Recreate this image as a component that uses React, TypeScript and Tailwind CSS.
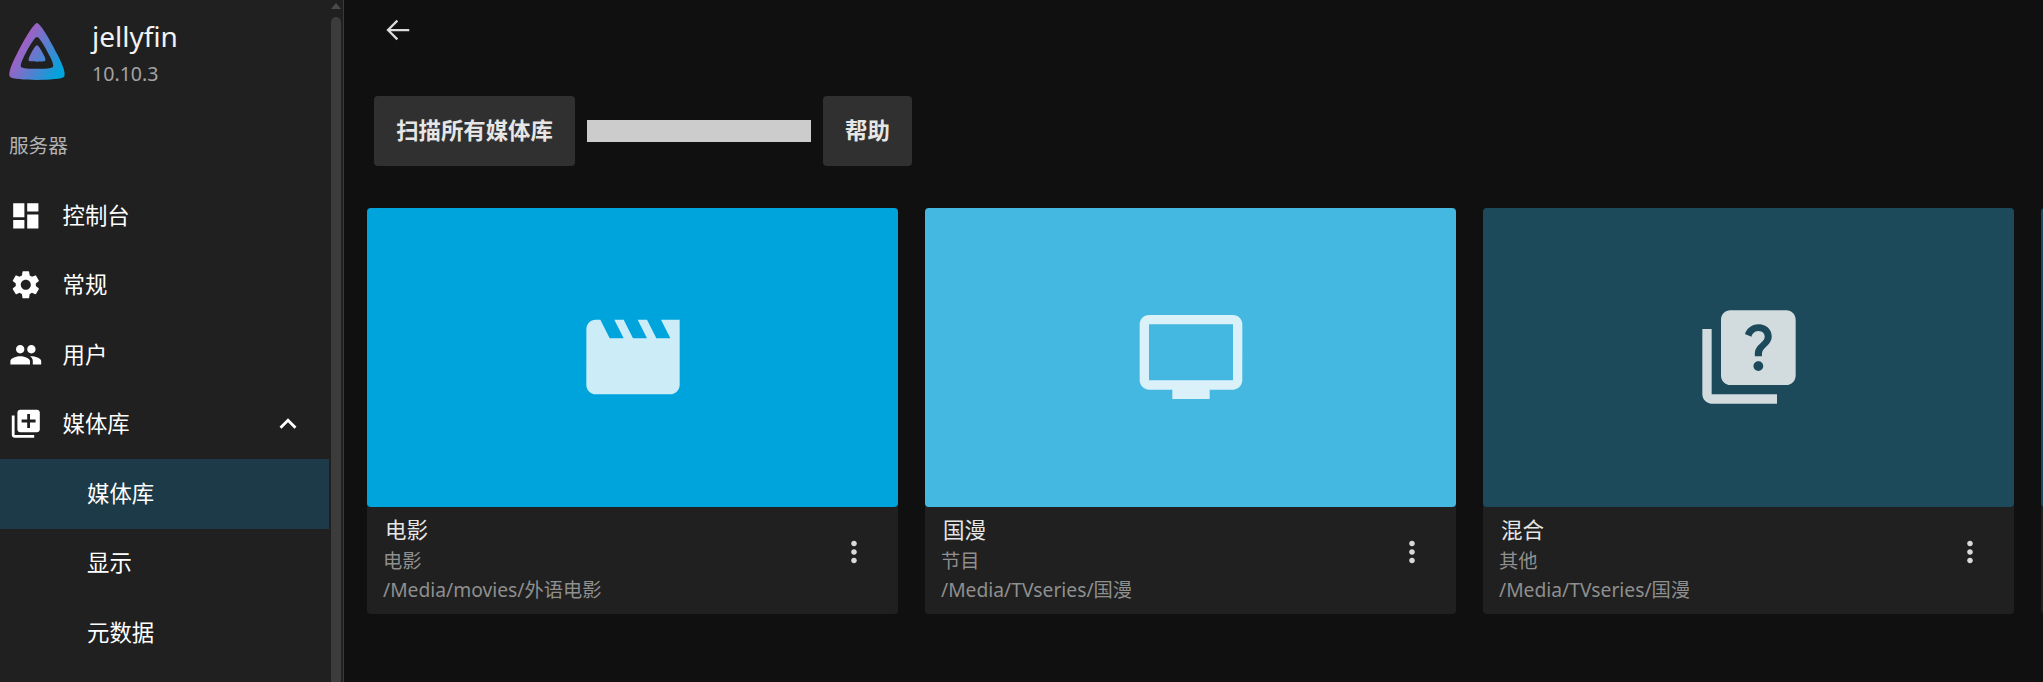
import { MdExpandLess } from 'react-icons/md';

const FONT = "font-['Noto_Sans','Noto_Sans_CJK_SC',sans-serif]";

function MdIcon({ d, className }: { d: string; className?: string }) {
  return (
    <svg viewBox="0 0 24 24" fill="currentColor" className={className}>
      <path d={d} />
    </svg>
  );
}

const ICONS = {
  dashboard: 'M3 13h8V3H3v10zm0 8h8v-6H3v6zm10 0h8V11h-8v10zm0-18v6h8V3h-8z',
  settings:
    'M19.14 12.94c.04-.3.06-.61.06-.94 0-.32-.02-.64-.07-.94l2.03-1.58c.18-.14.23-.41.12-.61l-1.92-3.32c-.12-.22-.37-.29-.59-.22l-2.39.96c-.5-.38-1.03-.7-1.62-.94l-.36-2.54c-.04-.24-.24-.41-.48-.41h-3.84c-.24 0-.43.17-.47.41l-.36 2.54c-.59.24-1.13.57-1.62.94l-2.39-.96c-.22-.08-.47 0-.59.22L2.74 8.87c-.12.21-.08.47.12.61l2.03 1.58c-.05.3-.09.63-.09.94s.02.64.07.94l-2.03 1.58c-.18.14-.23.41-.12.61l1.92 3.32c.12.22.37.29.59.22l2.39-.96c.5.38 1.03.7 1.62.94l.36 2.54c.05.24.24.41.48.41h3.84c.24 0 .44-.17.47-.41l.36-2.54c.59-.24 1.13-.56 1.62-.94l2.39.96c.22.08.47 0 .59-.22l1.92-3.32c.12-.22.07-.47-.12-.61l-2.01-1.58zM12 15.6c-1.98 0-3.6-1.62-3.6-3.6s1.62-3.6 3.6-3.6 3.6 1.62 3.6 3.6-1.62 3.6-3.6 3.6z',
  people:
    'M16 11c1.66 0 2.99-1.34 2.99-3S17.66 5 16 5c-1.66 0-3 1.34-3 3s1.34 3 3 3zm-8 0c1.66 0 2.99-1.34 2.99-3S9.66 5 8 5C6.34 5 5 6.34 5 8s1.34 3 3 3zm0 2c-2.33 0-7 1.17-7 3.5V19h14v-2.5c0-2.33-4.67-3.5-7-3.5zm8 0c-.29 0-.62.02-.97.05 1.16.84 1.97 1.97 1.97 3.45V19h6v-2.5c0-2.33-4.67-3.5-7-3.5z',
  libraryAdd:
    'M4 6H2v14c0 1.1.9 2 2 2h14v-2H4V6zm16-4H8c-1.1 0-2 .9-2 2v12c0 1.1.9 2 2 2h12c1.1 0 2-.9 2-2V4c0-1.1-.9-2-2-2zm-1 9h-4v4h-2v-4H9V9h4V5h2v4h4v2z',
  movie:
    'M18 4l2 4h-3l-2-4h-2l2 4h-3l-2-4H8l2 4H7L5 4H4c-1.1 0-1.99.9-1.99 2L2 18c0 1.1.9 2 2 2h16c1.1 0 2-.9 2-2V4h-4z',
  tv: 'M21 3H3c-1.1 0-2 .9-2 2v12c0 1.1.9 2 2 2h5v2h8v-2h5c1.1 0 1.99-.9 1.99-2L23 5c0-1.1-.9-2-2-2zm0 14H3V5h18v12z',
  quiz: 'M4 6H2v14c0 1.1.9 2 2 2h14v-2H4V6zm16-4H8c-1.1 0-2 .9-2 2v12c0 1.1.9 2 2 2h12c1.1 0 2-.9 2-2V4c0-1.1-.9-2-2-2zm-5.99 13c-.59 0-1.05-.47-1.05-1.05 0-.59.47-1.04 1.05-1.04.59 0 1.04.45 1.04 1.04-.01.58-.45 1.05-1.04 1.05zm2.5-6.17c-.63.93-1.23 1.21-1.56 1.81-.13.24-.18.4-.18 1.18h-1.52c0-.41-.06-1.08.26-1.65.41-.73 1.18-1.16 1.63-1.8.48-.68.21-1.94-1.14-1.94-.88 0-1.32.67-1.5 1.23l-1.37-.57C11.51 5.96 12.52 5 13.99 5c1.23 0 2.08.56 2.51 1.26.37.61.58 1.73.01 2.57z',
  more: 'M12 8c1.1 0 2-.9 2-2s-.9-2-2-2-2 .9-2 2 .9 2 2 2zm0 2c-1.1 0-2 .9-2 2s.9 2 2 2 2-.9 2-2-.9-2-2-2zm0 6c-1.1 0-2 .9-2 2s.9 2 2 2 2-.9 2-2-.9-2-2-2z',
};

function Logo() {
  return (
    <svg viewBox="0 0 512 512" className="mt-[21px] h-[60px] w-[60px] shrink-0">
      <defs>
        <linearGradient id="jf" x1="110" y1="190" x2="470" y2="400" gradientUnits="userSpaceOnUse">
          <stop offset="0" stopColor="#aa5cc3" />
          <stop offset="1" stopColor="#00a4dc" />
        </linearGradient>
      </defs>
      <path
        fill="url(#jf)"
        fillRule="evenodd"
        d="M256 18c-30 0-127 176-172 264C50 350 6 440 24 476c36 36 428 36 464 0 18-36-26-126-60-194C383 194 286 18 256 18zm0 118c22 0 82 108 112 170 20 42 32 76 24 86-20 22-252 22-272 0-8-10 4-44 24-86 30-62 90-170 112-170zm0 70c-14 0-50 64-64 96-8 18-10 34-6 38 12 10 128 10 140 0 4-4 2-20-6-38-14-32-50-96-64-96z"
      />
    </svg>
  );
}

function NavItem({ icon, label, chevron }: { icon: string; label: string; chevron?: boolean }) {
  return (
    <div className="flex h-[69.5px] items-center pl-[9px] text-white">
      <MdIcon d={icon} className="h-[33.6px] w-[33.6px] shrink-0" />
      <span className="ml-[20px] text-[22.4px] leading-none">{label}</span>
      {chevron && <MdExpandLess className="ml-auto mr-[38px] h-[34px] w-[34px]" />}
    </div>
  );
}

function SubItem({ label, active }: { label: string; active?: boolean }) {
  return (
    <div className={`flex h-[69.5px] w-[329px] items-center pl-[87px] text-[22.4px] leading-none text-white ${active ? 'bg-[#1c3a47]' : ''}`}>
      {label}
    </div>
  );
}

function Sidebar() {
  return (
    <aside className="relative h-full w-[344px] shrink-0 border-r border-[#3a3a3a] bg-[#202020]">
      <div className="flex items-start pl-[7px]">
        <Logo />
        <div className="ml-[25px] pt-[18px]">
          <div className="text-[28px] leading-[36px] text-[#f2f2f2]">jellyfin</div>
          <div className="mt-[6px] text-[19.6px] leading-[27px] text-[#a3a3a3]">10.10.3</div>
        </div>
      </div>
      <div className="mt-[45px] pl-[9px] text-[19.6px] leading-[28px] text-[#b3b3b3]">服务器</div>
      <div className="mt-[21px]">
        <NavItem icon={ICONS.dashboard} label="控制台" />
        <NavItem icon={ICONS.settings} label="常规" />
        <NavItem icon={ICONS.people} label="用户" />
        <NavItem icon={ICONS.libraryAdd} label="媒体库" chevron />
        <SubItem label="媒体库" active />
        <SubItem label="显示" />
        <SubItem label="元数据" />
      </div>
      {/* scrollbar */}
      <div className="absolute right-[2px] top-0 flex h-full w-[10px] flex-col items-center">
        <div className="mt-[3px] h-0 w-0 border-x-[5px] border-b-[6px] border-x-transparent border-b-[#4a4a4a]" />
        <div className="mt-[8px] w-full flex-1 rounded-t-[5px] bg-[#3c3c3c]" />
      </div>
    </aside>
  );
}

type Lib = { name: string; type: string; path: string; icon: string; bg: string };

const LIBS: Lib[] = [
  { name: '电影', type: '电影', path: '/Media/movies/外语电影', icon: ICONS.movie, bg: 'bg-[#00a4dc]' },
  { name: '国漫', type: '节目', path: '/Media/TVseries/国漫', icon: ICONS.tv, bg: 'bg-[#44b8e1]' },
  { name: '混合', type: '其他', path: '/Media/TVseries/国漫', icon: ICONS.quiz, bg: 'bg-[#1c4a5b]' },
];

function LibCard({ lib }: { lib: Lib }) {
  return (
    <article className="relative w-[531px] shrink-0 rounded-[4px] bg-[#202020]">
      <div className={`flex h-[299px] items-center justify-center rounded-[4px] pb-[1px] ${lib.bg}`}>
        <MdIcon d={lib.icon} className="h-[112px] w-[112px] text-white/80" />
      </div>
      <div className="h-[107px] pl-[16px] pt-[8px]">
        <div className="ml-[2px] text-[21.5px] leading-[30px] text-[#e6e6e6]">{lib.name}</div>
        <div className="mt-[1px] text-[19.25px] leading-[29px] text-[#8f8f8f]">{lib.type}</div>
        <div className="text-[19.25px] leading-[29px] text-[#8f8f8f]">{lib.path}</div>
      </div>
      <MdIcon d={ICONS.more} className="absolute bottom-[45px] right-[27px] h-[34px] w-[34px] text-[#d9d9d9]" />
    </article>
  );
}

export default function App() {
  return (
    <div className={`flex h-[682px] w-[2043px] overflow-hidden bg-[#101010] ${FONT}`}>
      <Sidebar />
      <main className="min-w-0 flex-1 overflow-hidden pl-[23px]">
        <svg viewBox="0 0 24 24" className="ml-[16px] mt-[15px] h-[30px] w-[30px] text-[#dcdcdc]" fill="none" stroke="currentColor" strokeWidth="1.8">
          <path d="M21 12H4M11.5 4.5 4 12l7.5 7.5" />
        </svg>
        <div className="mt-[51px] flex items-center pl-[7px]">
          <button className="h-[70px] w-[201px] rounded-[4px] bg-[#303030] text-[22.4px] font-bold text-[#e6e6e6]">扫描所有媒体库</button>
          <div className="ml-[12px] h-[22px] w-[224px] bg-[#cccccc]" />
          <button className="ml-[12px] h-[70px] w-[89px] rounded-[4px] bg-[#303030] text-[22.4px] font-bold text-[#e6e6e6]">帮助</button>
        </div>
        <div className="mt-[42px] flex gap-[27px]">
          {LIBS.map((lib) => (
            <LibCard key={lib.name} lib={lib} />
          ))}
          <article className="h-[406px] w-[531px] shrink-0 rounded-[4px] bg-[#202020]">
            <div className="h-[299px] rounded-[4px] bg-[#1c4a5b]" />
          </article>
        </div>
      </main>
    </div>
  );
}
